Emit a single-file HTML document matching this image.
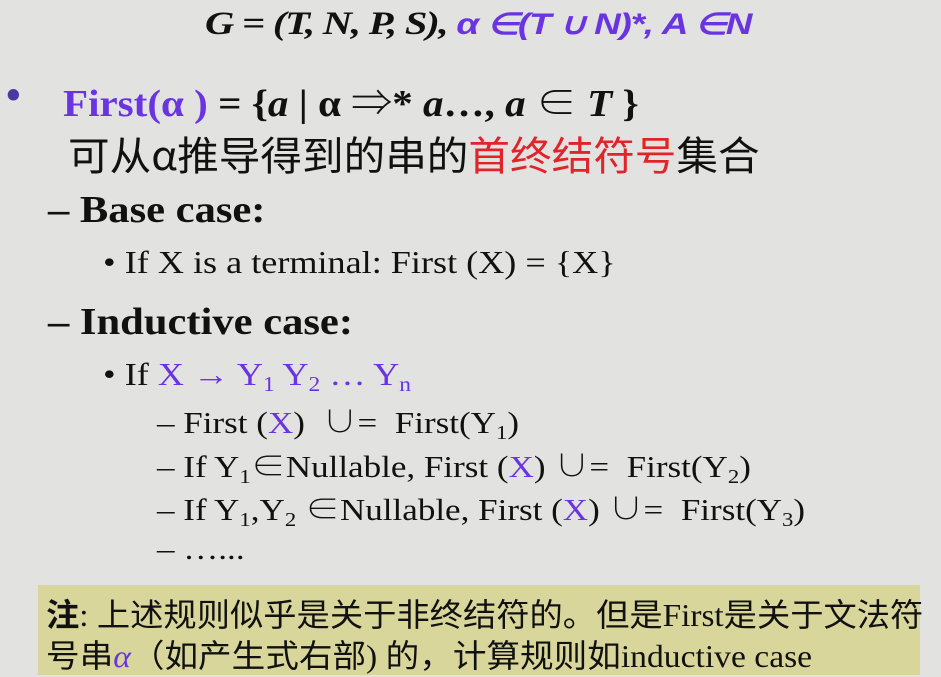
<!DOCTYPE html><html><head><meta charset="utf-8"><style>
body{margin:0;width:941px;height:675px;background:#e2e2e0;overflow:hidden;position:relative;font-family:"Liberation Serif","Noto Serif CJK SC",serif;color:#111}
.a{position:absolute;white-space:nowrap;transform-origin:0 50%}
.p{color:#6a35e0}.r{color:#e0242a}
sub{font-size:65%;vertical-align:-0.3em;line-height:0}
</style></head><body>
<div class="a" style="left:205px;top:6px;font-size:33px;font-weight:bold;font-style:italic;letter-spacing:-1px;transform:scaleX(1.23)">G = (T, N, P, S), <span class="p" style="font-family:'Liberation Sans',sans-serif;font-size:30px">α ∈(T ∪ N)*, A ∈N</span></div>
<div class="a" style="left:6px;top:72px;font-size:42px;font-weight:bold;color:#4a3aa0">•</div>
<div class="a" style="left:63px;top:72px;font-size:38px;font-weight:bold;transform:scaleX(1.08)"><span class="p">First(α )</span> = {<i>a</i> | α ⇒* <i>a</i>…, <i>a</i> ∈ <i>T</i> }</div>
<div class="a" style="left:68px;top:124px;font-size:40px;font-family:'Noto Sans CJK SC',sans-serif;transform:scaleX(1.04)">可从α推导得到的串的<span class="r">首终结符号</span>集合</div>
<div class="a" style="left:48px;top:188px;font-size:38px;font-weight:bold;transform:scaleX(1.12)">– Base case:</div>
<div class="a" style="left:103px;top:244px;font-size:32px;transform:scaleX(1.13)">• If X is a terminal: First (X) = {X}</div>
<div class="a" style="left:48px;top:300px;font-size:38px;font-weight:bold;transform:scaleX(1.12)">– Inductive case:</div>
<div class="a" style="left:103px;top:356px;font-size:32px;transform:scaleX(1.13)">• If <span class="p">X → Y<sub>1</sub> Y<sub>2</sub> … Y<sub>n</sub></span></div>
<div class="a" style="left:157px;top:397px;font-size:31px;transform:scaleX(1.13)">– First (<span class="p">X</span>) &nbsp;∪= &nbsp;First(Y<sub>1</sub>)</div>
<div class="a" style="left:157px;top:441px;font-size:31px;transform:scaleX(1.13)">– If Y<sub>1</sub>∈Nullable, First (<span class="p">X</span>) ∪= &nbsp;First(Y<sub>2</sub>)</div>
<div class="a" style="left:157px;top:484px;font-size:31px;transform:scaleX(1.13)">– If Y<sub>1</sub>,Y<sub>2</sub> ∈Nullable, First (<span class="p">X</span>) ∪= &nbsp;First(Y<sub>3</sub>)</div>
<div class="a" style="left:157px;top:531px;font-size:31px;transform:scaleX(1.13)">– …...</div>
<div class="a" style="left:38px;top:585px;width:882px;height:90px;background:#d8d69a"></div>
<div class="a" style="left:46px;top:590px;font-size:32px;font-family:'Liberation Serif','Noto Sans CJK SC',sans-serif;transform:scaleX(1.04)"><b>注</b>: 上述规则似乎是关于非终结符的。但是First是关于文法符</div>
<div class="a" style="left:46px;top:631px;font-size:32px;font-family:'Liberation Serif','Noto Sans CJK SC',sans-serif;transform:scaleX(1.05)">号串<i class="p">α</i>（如产生式右部) 的，计算规则如inductive case</div>
</body></html>
